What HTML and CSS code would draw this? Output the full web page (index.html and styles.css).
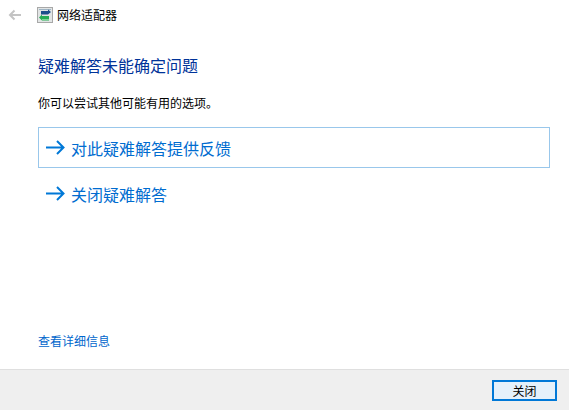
FILE: index.html
```html
<!DOCTYPE html>
<html lang="zh-CN">
<head>
    <meta charset="UTF-8">
    <title>网络适配器</title>
    <link rel="stylesheet" href="styles.css">
</head>
<body>
    <div class="titlebar">
        <svg class="back-icon" width="14" height="12" viewBox="0 0 14 12">
            <path d="M13 6H2M6.500 1.500L2 6l4.500 4.500" fill="none" stroke="#c4c4c4" stroke-width="2"/>
        </svg>
        <svg class="app-icon" width="16" height="16" viewBox="0 0 16 16">
            <rect x="0.500" y="0.500" width="15" height="15" fill="#e2e5e5" stroke="#a8a8a8"/>
            <rect x="2" y="2" width="12" height="1" fill="#9fb4c4"/>
            <path d="M4 4h7V2.500L14 5l-3 2.500H4z" fill="#1d4f8c"/>
            <path d="M12 9H5V7.500L2 10.500 5 13.500H12z" fill="#27ad55"/>
            <rect x="5" y="12" width="7" height="1" fill="#7fd69a"/>
        </svg>
        <span class="window-title">网络适配器</span>
    </div>

    <div class="content">
        <h1>疑难解答未能确定问题</h1>
        <p class="hint">你可以尝试其他可能有用的选项。</p>

        <a class="option option-focus" href="#">
            <svg class="arrow" width="19" height="15" viewBox="0 0 19 15">
                <path d="M0 7.500h17M11 1l6.500 6.500L11 14" fill="none" stroke="#0078d7" stroke-width="2"/>
            </svg>
            <span>对此疑难解答提供反馈</span>
        </a>
        <a class="option" href="#">
            <svg class="arrow" width="19" height="15" viewBox="0 0 19 15">
                <path d="M0 7.500h17M11 1l6.500 6.500L11 14" fill="none" stroke="#0078d7" stroke-width="2"/>
            </svg>
            <span>关闭疑难解答</span>
        </a>

        <a class="details" href="#">查看详细信息</a>
    </div>

    <div class="footer">
        <button type="button" class="close-btn">关闭</button>
    </div>
</body>
</html>
```

FILE: styles.css
```css
html, body {
    height: 100%;
}
body {
    margin: 0;
    display: flex;
    flex-direction: column;
    background-color: #fff;
    font-family: "Liberation Sans", "Noto Sans CJK SC", sans-serif;
    font-size: 12px;
    color: #000;
    overflow: hidden;
}
.titlebar {
    display: flex;
    align-items: center;
    height: 30px;
    padding-left: 8px;
}
.back-icon {
    margin-right: 15px;
}
.app-icon {
    margin-right: 4px;
}
.window-title {
    margin-top: 1px;
    line-height: 16px;
}
.content {
    flex: 1;
    display: flex;
    flex-direction: column;
    padding: 26px 19px 0 38px;
}
h1 {
    margin: 0;
    font-size: 16px;
    font-weight: normal;
    line-height: 22px;
    color: #003399;
}
.hint {
    margin: 18px 0 15px;
    line-height: 16px;
}
.option {
    display: flex;
    align-items: center;
    height: 39px;
    padding-left: 7px;
    border: 1px solid transparent;
    font-size: 16px;
    color: #006cd0;
    text-decoration: none;
}
.option-focus {
    border-color: #99c7eb;
    margin-bottom: 5px;
}
.arrow {
    margin-right: 6px;
}
.details {
    margin-top: auto;
    margin-bottom: 19px;
    line-height: 16px;
    color: #0066cc;
    text-decoration: none;
}
.footer {
    display: flex;
    justify-content: flex-end;
    align-items: center;
    height: 40px;
    padding-right: 12px;
    background-color: #efefef;
    border-top: 1px solid #dfdfdf;
}
.close-btn {
    width: 65px;
    height: 21px;
    padding: 0;
    background-color: #e5f1fb;
    border: 2px solid #0078d7;
    font: inherit;
    color: #000;
}
```
